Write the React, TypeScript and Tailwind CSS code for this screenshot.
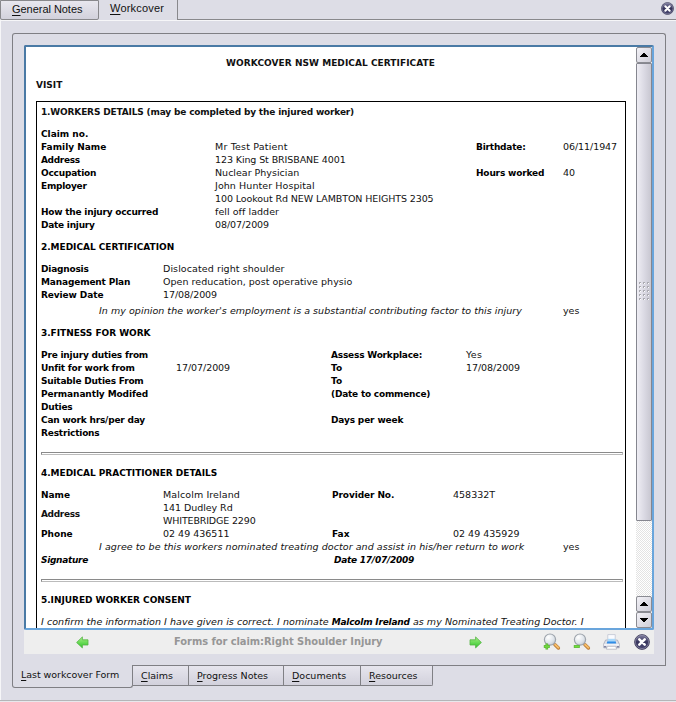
import type { ReactNode } from "react";

type Cell = { w: string; text?: ReactNode; bold?: boolean; t?: string };

function Row({ cells }: { cells: Cell[] }) {
  return (
    <div className="flex h-[13px] whitespace-nowrap">
      {cells.map((c, i) => (
        <div key={i} className={`${c.w} ${c.t ?? ""} shrink-0 ${c.bold ? "text-[9px] leading-[15px] font-bold text-black" : "text-[9.5px] leading-[13px] text-[#111]"}`}>
          {c.text}
        </div>
      ))}
    </div>
  );
}

function Heading({ children }: { children: ReactNode }) {
  return <h2 className="my-[9px] h-[13px] font-bold tracking-[-0.03px] whitespace-nowrap text-black">{children}</h2>;
}

function Rule() {
  return <div className="mr-[2px] h-[3px] border border-[#8a8a8a] border-r-[#bbb] border-b-[#bbb]" />;
}

function CloseIcon({ size }: { size: number }) {
  return (
    <svg width={size} height={size} viewBox="0 0 16 16" className="block shrink-0">
      <defs>
        <linearGradient id={`ball${size}`} x1="0" y1="0" x2="0" y2="1">
          <stop offset="0" stopColor="#8583a4" />
          <stop offset=".5" stopColor="#37355c" />
          <stop offset="1" stopColor="#4b4973" />
        </linearGradient>
      </defs>
      <circle cx="8" cy="8" r="7.4" fill={`url(#ball${size})`} stroke="#3b3a57" strokeWidth=".8" />
      <circle cx="8" cy="8" r="6.6" fill="none" stroke="#9a99b4" strokeWidth=".6" />
      <path d="M5.3 5.3l5.4 5.4M10.7 5.3l-5.4 5.4" stroke="#fff" strokeWidth="2.5" strokeLinecap="round" />
    </svg>
  );
}

function Arrow({ right = false }: { right?: boolean }) {
  return (
    <svg width="13" height="13" viewBox="0 0 13 13" className={right ? "block -scale-x-100" : "block"}>
      <defs>
        <linearGradient id="green" x1="0" y1="0" x2="0" y2="1">
          <stop offset="0" stopColor="#a6f283" />
          <stop offset="1" stopColor="#2fc42b" />
        </linearGradient>
      </defs>
      <path d="M.6 6.5L6.4 .9v2.9h5.6v5.2H6.4v2.9z" fill="url(#green)" stroke="#55b345" strokeWidth=".8" strokeLinejoin="round" />
    </svg>
  );
}

function Magnifier({ plus = false }: { plus?: boolean }) {
  return (
    <svg width="18" height="18" viewBox="0 0 18 18" className="block">
      <defs>
        <radialGradient id="lens" cx=".35" cy=".3" r=".8">
          <stop offset="0" stopColor="#fff" />
          <stop offset=".6" stopColor="#e0e5eb" />
          <stop offset="1" stopColor="#bfc7d0" />
        </radialGradient>
      </defs>
      <path d="M10.2 10.2l2.2 2.2" stroke="#8d8d8d" strokeWidth="1.6" />
      <path d="M12 11.8l3.4 3.2" stroke="#b97a35" strokeWidth="3.4" strokeLinecap="round" />
      <path d="M12.1 11.6l3.3 3.1" stroke="#f6bd68" strokeWidth="1.9" strokeLinecap="round" />
      <circle cx="7" cy="6.6" r="5.6" fill="url(#lens)" stroke="#9fa5ad" strokeWidth="1.2" />
      <path d="M.8 13.5h6" stroke="#56b030" strokeWidth="2.8" />
      {plus && <path d="M3.8 10.5v6" stroke="#56b030" strokeWidth="2.6" />}
      <path d="M1.4 13.5h4.8" stroke="#70e03c" strokeWidth="1.5" />
      {plus && <path d="M3.8 11.1v4.8" stroke="#70d040" strokeWidth="1.4" />}
    </svg>
  );
}

function Printer() {
  return (
    <svg width="17" height="17" viewBox="0 0 17 17" className="block">
      <path d="M2.6 6h11.8l1.9 4v3.8H.7V10z" fill="#dcdfe8" stroke="#a6a9b9" strokeWidth=".8" />
      <path d="M4.8.6h7.4V8H4.8z" fill="#fafbfe" stroke="#b9bfce" strokeWidth=".7" />
      <path d="M4.8 4.8h7.4v3.4H4.8z" fill="#a9d8fa" />
      <path d="M4.2 7.4h8.6l.4 2.2H3.8z" fill="#2f8ce6" />
      <path d="M.9 10.2h15.2v1.4H.9z" fill="#f7f7fb" />
      <path d="M4.2 12.3h8.6l.8 2.9H3.4z" fill="#fff" stroke="#a9abb8" strokeWidth=".7" />
      <path d="M1 12.7h2.2M13.8 12.7H16" stroke="#8286a4" strokeWidth="1.4" />
    </svg>
  );
}

function StepButton({ down = false }: { down?: boolean }) {
  return (
    <div className="flex h-4 w-4 shrink-0 items-center justify-center rounded-[2px] border border-[#8a8b92] bg-linear-to-br from-[#f3f2f7] to-[#cfced8]">
      <svg width="8" height="4" viewBox="0 0 8 4" shapeRendering="crispEdges" className={down ? "rotate-180" : ""}>
        <path d="M3 0h2v1h1v1h1v1h1v1H0V3h1V2h1V1h1z" fill="#000" />
      </svg>
    </div>
  );
}

function Grip() {
  return (
    <div className="grid grid-cols-3 gap-[2px]">
      {Array.from({ length: 15 }, (_, i) => (
        <div key={i} className="h-[2px] w-[2px] border-t border-l border-[#a9a9b0] bg-white" />
      ))}
    </div>
  );
}

function BottomTab({ hot, rest, w }: { hot: string; rest: string; w: string }) {
  return (
    <div className={`${w} h-[20px] shrink-0 border-r border-b border-[#808085] bg-linear-to-b from-[#e6e5ed] to-[#d2d1dc] pl-[8px] leading-[20px] last:rounded-br-[2px]`}>
      <span className="underline underline-offset-2">{hot}</span>
      {rest}
    </div>
  );
}

function Certificate() {
  return (
    <div className="h-[581px] w-[610px] shrink-0 overflow-hidden bg-white pt-[9px] pl-[10px] font-['DejaVu_Sans',sans-serif] text-[9px] leading-[15px]">
      <h1 className="h-[13px] w-[589px] text-center font-bold tracking-[0.05px]">WORKCOVER NSW MEDICAL CERTIFICATE</h1>
      <div className="mt-[9px] h-[13px] font-bold">VISIT</div>
      <div className="mt-[10px] h-[600px] w-[590px] border border-black pt-[3px] pl-[4px]">
        <h2 className="mb-[9px] h-[13px] font-bold tracking-[-0.17px]">1.WORKERS DETAILS (may be completed by the injured worker)</h2>
        <Row cells={[{ w: "w-[174px]", text: "Claim no.", bold: true }]} />
        <Row
          cells={[
            { w: "w-[174px]", text: "Family Name", bold: true },
            { w: "w-[261px]", text: "Mr Test Patient", t: "tracking-[0.18px]" },
            { w: "w-[87px]", text: "Birthdate:", bold: true, t: "tracking-[-0.2px]" },
            { w: "w-[60px]", text: "06/11/1947", t: "tracking-[-0.07px]" },
          ]}
        />
        <Row cells={[{ w: "w-[174px]", text: "Address", bold: true, t: "tracking-[-0.35px]" }, { w: "w-[261px]", text: "123 King St BRISBANE 4001", t: "tracking-[-0.1px]" }]} />
        <Row
          cells={[
            { w: "w-[174px]", text: "Occupation", bold: true, t: "tracking-[-0.2px]" },
            { w: "w-[261px]", text: "Nuclear Physician" },
            { w: "w-[87px]", text: "Hours worked", bold: true, t: "tracking-[-0.17px]" },
            { w: "w-[60px]", text: "40" },
          ]}
        />
        <Row cells={[{ w: "w-[174px]", text: "Employer", bold: true, t: "tracking-[-0.25px]" }, { w: "w-[261px]", text: "John Hunter Hospital", t: "tracking-[0.08px]" }]} />
        <Row cells={[{ w: "w-[174px]" }, { w: "w-[261px]", text: "100 Lookout Rd NEW LAMBTON HEIGHTS 2305", t: "tracking-[-0.1px]" }]} />
        <Row cells={[{ w: "w-[174px]", text: "How the injury occurred", bold: true, t: "tracking-[-0.22px]" }, { w: "w-[261px]", text: "fell off ladder", t: "tracking-[0.05px]" }]} />
        <Row cells={[{ w: "w-[174px]", text: "Date injury", bold: true, t: "tracking-[-0.25px]" }, { w: "w-[261px]", text: "08/07/2009", t: "tracking-[-0.07px]" }]} />
        <Heading>2.MEDICAL CERTIFICATION</Heading>
        <Row cells={[{ w: "w-[122px]", text: "Diagnosis", bold: true, t: "tracking-[-0.2px]" }, { w: "w-[261px]", text: "Dislocated right shoulder", t: "tracking-[0.08px]" }]} />
        <Row cells={[{ w: "w-[122px]", text: "Management Plan", bold: true, t: "tracking-[-0.15px]" }, { w: "w-[261px]", text: "Open reducation, post operative physio", t: "tracking-[0.03px]" }]} />
        <Row cells={[{ w: "w-[122px]", text: "Review Date", bold: true, t: "tracking-[-0.1px]" }, { w: "w-[261px]", text: "17/08/2009", t: "tracking-[-0.07px]" }]} />
        <div className="mt-[3px]">
          <Row
            cells={[
              { w: "w-[58px]" },
              { w: "w-[464px]", text: <i>In my opinion the worker's employment is a substantial contributing factor to this injury</i>, t: "tracking-[0.045px]" },
              { w: "w-[50px]", text: "yes" },
            ]}
          />
        </div>
        <Heading>3.FITNESS FOR WORK</Heading>
        <Row
          cells={[
            { w: "w-[290px]", text: "Pre injury duties from", bold: true, t: "tracking-[-0.2px]" },
            { w: "w-[135px]", text: "Assess Workplace:", bold: true, t: "tracking-[-0.2px]" },
            { w: "w-[60px]", text: "Yes", t: "tracking-[0.3px]" },
          ]}
        />
        <Row
          cells={[
            { w: "w-[135px]", text: "Unfit for work from", bold: true, t: "tracking-[-0.22px]" },
            { w: "w-[155px]", text: "17/07/2009", t: "tracking-[-0.07px]" },
            { w: "w-[135px]", text: "To", bold: true },
            { w: "w-[60px]", text: "17/08/2009", t: "tracking-[-0.07px]" },
          ]}
        />
        <Row cells={[{ w: "w-[290px]", text: "Suitable Duties From", bold: true, t: "tracking-[-0.2px]" }, { w: "w-[135px]", text: "To", bold: true }]} />
        <Row cells={[{ w: "w-[290px]", text: "Permanantly Modifed", bold: true, t: "tracking-[-0.1px]" }, { w: "w-[135px]", text: "(Date to commence)", bold: true, t: "tracking-[-0.22px]" }]} />
        <Row cells={[{ w: "w-[290px]", text: "Duties", bold: true, t: "tracking-[-0.2px]" }]} />
        <Row cells={[{ w: "w-[290px]", text: "Can work hrs/per day", bold: true, t: "tracking-[-0.2px]" }, { w: "w-[135px]", text: "Days per week", bold: true, t: "tracking-[-0.15px]" }]} />
        <Row cells={[{ w: "w-[290px]", text: "Restrictions", bold: true, t: "tracking-[-0.2px]" }]} />
        <div className="mt-[13px] mb-[11px]">
          <Rule />
        </div>
        <Heading>4.MEDICAL PRACTITIONER DETAILS</Heading>
        <Row
          cells={[
            { w: "w-[122px]", text: "Name", bold: true },
            { w: "w-[169px]", text: "Malcolm Ireland", t: "tracking-[0.1px]" },
            { w: "w-[121px]", text: "Provider No.", bold: true, t: "tracking-[-0.1px]" },
            { w: "w-[80px]", text: "458332T" },
          ]}
        />
        <div className="flex h-[26px] items-center">
          <div className="w-[122px] font-bold tracking-[-0.35px]">Address</div>
          <div>
            <Row cells={[{ w: "w-[169px]", text: "141 Dudley Rd", t: "tracking-[-0.05px]" }]} />
            <Row cells={[{ w: "w-[169px]", text: "WHITEBRIDGE 2290", t: "tracking-[-0.15px]" }]} />
          </div>
        </div>
        <Row cells={[{ w: "w-[122px]", text: "Phone", bold: true }, { w: "w-[169px]", text: "02 49 436511" }, { w: "w-[121px]", text: "Fax", bold: true }, { w: "w-[80px]", text: "02 49 435929" }]} />
        <Row
          cells={[
            { w: "w-[58px]" },
            { w: "w-[464px]", text: <i>I agree to be this workers nominated treating doctor and assist in his/her return to work</i>, t: "tracking-[0.065px]" },
            { w: "w-[50px]", text: "yes" },
          ]}
        />
        <Row cells={[{ w: "w-[293px]", text: <i>Signature</i>, bold: true, t: "tracking-[-0.3px]" }, { w: "w-[150px]", text: <i>Date 17/07/2009</i>, bold: true, t: "tracking-[-0.25px]" }]} />
        <div className="mt-[13px] mb-[11px]">
          <Rule />
        </div>
        <Heading>5.INJURED WORKER CONSENT</Heading>
        <p className="h-[13px] text-[9.5px] leading-[13px] tracking-[0.055px] whitespace-nowrap text-[#111] italic">
          I confirm the information I have given is correct. I nominate <b className="text-[9px] tracking-[-0.2px] text-black">Malcolm Ireland</b> as my Nominated Treating Doctor. I
        </p>
      </div>
    </div>
  );
}

export default function App() {
  return (
    <div className="flex h-[702px] w-[676px] flex-col overflow-hidden bg-[#dddde6] font-['DejaVu_Sans',sans-serif] text-[#111]">
      <div className="flex h-[20px] shrink-0 font-['Liberation_Sans',sans-serif] text-[11px]">
        <div className="h-[20px] w-[99px] rounded-b-[2px] border border-[#88888c] bg-linear-to-b from-[#e8e7ee] to-[#d2d1dc] pl-[11px] leading-[17px] tracking-[-0.04px]">
          <span className="underline underline-offset-2">G</span>eneral Notes
        </div>
        <div className="h-[20px] w-[79px] border-r border-[#88888c] pl-[11px] leading-[17px] tracking-[0.2px]">
          <span className="underline underline-offset-2">W</span>orkcover
        </div>
        <div className="flex h-[20px] flex-1 justify-end border-b border-[#88888c] pt-[2px] pr-[2px]">
          <CloseIcon size={13} />
        </div>
      </div>
      <div className="flex h-[680px] shrink-0 flex-col border-t border-l border-[#f6f6f8] pt-[12px] pl-[11px]">
        <div className="h-[632px] w-[654px] shrink-0 rounded-t-[3px] border-x border-t border-[#7f7f84] pt-[11px] pl-[11px]">
          <div className="flex h-[585px] w-[630px] rounded-[2px] border-2 border-t-[#4a7aa5] border-r-[#69a5dc] border-b-[#69a5dc] border-l-[#4a7aa5] bg-white">
            <Certificate />
            <div className="flex h-[581px] w-[16px] shrink-0 flex-col bg-[repeating-conic-gradient(#e3e3e3_0_25%,#fff_0_50%)] bg-[size:2px_2px]">
              <StepButton />
              <div className="flex h-[458px] shrink-0 items-center justify-center rounded-[1px] border border-[#85868f] bg-linear-to-r from-[#efeef4] via-[#dbdae4] to-[#c8c7d1] pb-[2px]">
                <Grip />
              </div>
              <div className="flex-1" />
              <StepButton />
              <StepButton down />
            </div>
          </div>
          <div className="flex h-[24px] w-[630px] items-center bg-[#eeeeee]">
            <div className="w-[150px] pl-[52px]">
              <Arrow />
            </div>
            <div className="w-[295px] font-['DejaVu_Sans_Condensed','DejaVu_Sans',sans-serif] text-[11px] font-bold tracking-[-0.04px] whitespace-nowrap text-[#969696]">Forms for claim:Right Shoulder Injury</div>
            <div className="w-[74px]">
              <Arrow right />
            </div>
            <div className="w-[30px]">
              <Magnifier plus />
            </div>
            <div className="w-[30px]">
              <Magnifier />
            </div>
            <div className="w-[31px]">
              <Printer />
            </div>
            <CloseIcon size={16} />
          </div>
        </div>
        <div className="flex text-[9.5px] whitespace-nowrap">
          <div className="h-[23px] w-[121px] shrink-0 rounded-b-[3px] border-r border-b border-l border-[#7f7f84] pl-[8px] leading-[20px] tracking-[-0.05px]">
            <span className="underline underline-offset-2">L</span>ast workcover Form
          </div>
          <div className="flex h-[21px] w-[533px] border-t border-[#7f7f84]">
            <BottomTab w="w-[56px]" hot="C" rest="laims" />
            <BottomTab w="w-[95px]" hot="P" rest="rogress Notes" />
            <BottomTab w="w-[77px]" hot="D" rest="ocuments" />
            <BottomTab w="w-[72px]" hot="R" rest="esources" />
          </div>
        </div>
      </div>
      <div className="h-[2px] shrink-0 border-t border-[#b5b5b8] bg-[#e8e8ec]" />
    </div>
  );
}
